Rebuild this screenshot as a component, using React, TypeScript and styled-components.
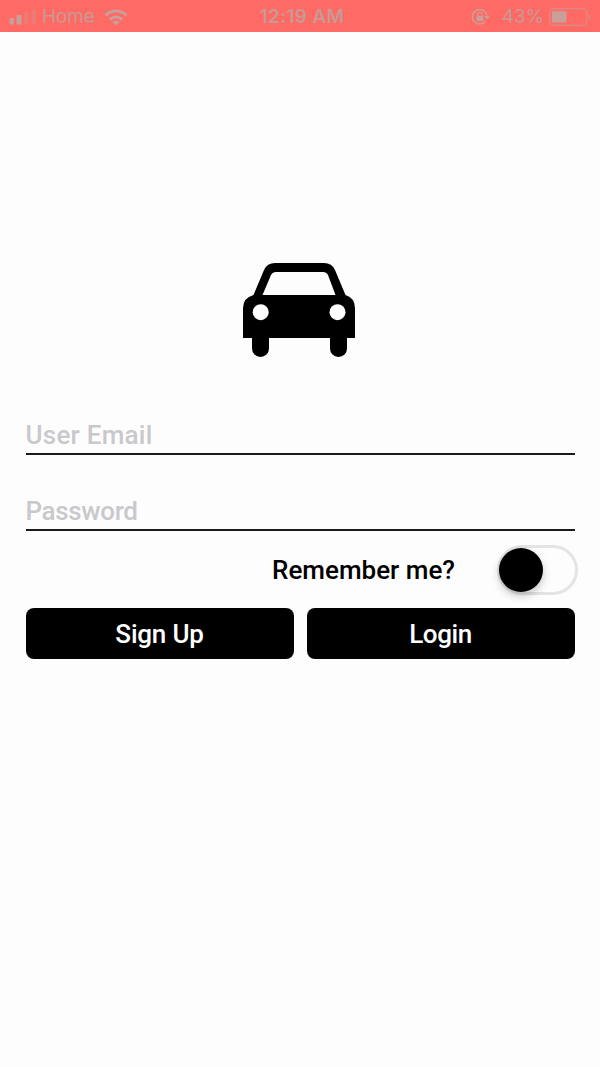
import React from "react";
import styled, { createGlobalStyle } from "styled-components";

const GlobalStyle = createGlobalStyle`
  * { box-sizing: border-box; }
  body { margin: 0; background: #fefdfe; }
`;

const Screen = styled.div`
  display: flex;
  flex-direction: column;
  height: 1067px;
  background: #fefdfe;
  font-family: Roboto, sans-serif;
  overflow: hidden;
`;

const StatusBar = styled.header`
  display: grid;
  grid-template-columns: 1fr auto 1fr;
  align-items: center;
  height: 32px;
  padding: 2px 8px 0 9px;
  background: #ff6a64;
  color: #c99994;
  font-family: Inter, sans-serif;
  font-size: 19px;
  line-height: 30px;
`;

const StatusGroup = styled.div<{ $end?: boolean }>`
  display: flex;
  align-items: center;
  justify-content: ${(p) => (p.$end ? "flex-end" : "flex-start")};
  svg { display: block; flex: none; }
`;

const StatusText = styled.span<{ $spacing?: number; $bold?: boolean; $margin?: string }>`
  margin: ${(p) => p.$margin ?? "0 0 0 3px"};
  letter-spacing: ${(p) => p.$spacing ?? 0}px;
  font-weight: ${(p) => (p.$bold ? 600 : 400)};
`;

const Content = styled.main`
  display: flex;
  flex-direction: column;
  padding: 231px 25px 0 25.5px;
`;

const Logo = styled.svg`
  display: block;
  align-self: center;
  width: 112px;
  height: 94px;
  margin-right: 2.5px;
`;

const Field = styled.input<{ $top: number; $height: number; $spacing: number }>`
  display: block;
  width: 549px;
  height: ${(p) => p.$height}px;
  margin: ${(p) => p.$top}px 0 0;
  padding: 0;
  border: 0;
  border-bottom: 2px solid #1a1a1a;
  border-radius: 0;
  outline: 0;
  background: transparent;
  color: #000;
  font: 500 26px/36px Roboto, sans-serif;
  letter-spacing: ${(p) => p.$spacing}px;
  &::placeholder { color: #c9c8cb; opacity: 1; }
`;

const RememberRow = styled.label`
  display: flex;
  align-items: center;
  justify-content: flex-end;
  height: 50px;
  margin: 14px -3px 0 0;
`;

const RememberText = styled.span`
  margin: 0 42px 1px 0;
  font-size: 26px;
  font-weight: 500;
  line-height: 36px;
  color: #000;
`;

const Track = styled.span`
  display: flex;
  align-items: center;
  width: 81px;
  height: 50px;
  border: 3px solid #e4e3e5;
  border-radius: 25px;
`;

const Thumb = styled.span`
  width: 44px;
  height: 44px;
  margin-left: -1px;
  border-radius: 50%;
  background: #000;
  box-shadow: 0 4px 8px rgba(0, 0, 0, 0.22);
`;

const Actions = styled.div`
  display: grid;
  grid-template-columns: 268px 268px;
  column-gap: 13px;
  margin-top: 13px;
`;

const Button = styled.button<{ $spacing: number }>`
  height: 51px;
  padding: 1px 0 0;
  border: 0;
  border-radius: 8px;
  background: #000;
  color: #fff;
  font: 500 26px/50px Roboto, sans-serif;
  letter-spacing: ${(p) => p.$spacing}px;
`;

const SignalIcon = () => (
  <svg width="28" height="16" viewBox="0 0 28 16">
    <rect x="0.5" y="9" width="4.5" height="6.5" rx="1" fill="#c99f9a" />
    <rect x="7.5" y="6" width="5" height="9.5" rx="1" fill="#c99f9a" />
    <rect x="15" y="3" width="4.5" height="12.5" rx="1" fill="#ed7b75" />
    <rect x="22.5" y="0" width="4.5" height="15.5" rx="1" fill="#ed7b75" />
  </svg>
);

const WifiIcon = () => (
  <svg width="24" height="17" viewBox="0 0 24 17" fill="none" stroke="#c99f9a" strokeWidth="3">
    <path d="M1.5 6.5C7.2.6 16.8.6 22.5 6.5" />
    <path d="M5.8 10.5c3.5-3.3 8.9-3.3 12.4 0" />
    <path d="M12 16.5 8.4 13c2-1.8 5.2-1.8 7.2 0Z" fill="#c99f9a" stroke="none" />
  </svg>
);

const RotationLockIcon = () => (
  <svg width="20" height="18" viewBox="0 0 20 18" fill="none" stroke="#c99f9a" strokeWidth="1.5">
    <path d="M14.4 13.4A7.3 7.3 0 1 1 15.8 7" />
    <path d="M13 7.8h6l-3 4Z" fill="#c99f9a" stroke="none" />
    <rect x="5.7" y="7.9" width="6.6" height="5" rx=".6" fill="#c99f9a" stroke="none" />
    <path d="M7 8V6a2 2 0 0 1 4 0V8" strokeWidth="1.2" />
  </svg>
);

const BatteryIcon = () => (
  <svg width="43" height="18" viewBox="0 0 43 18">
    <rect x=".8" y=".8" width="37" height="16.4" rx="4" fill="none" stroke="#dd8883" strokeWidth="1.5" />
    <rect x="3" y="3.3" width="14.5" height="11.2" rx="1" fill="#c99f9a" />
    <path d="M39.7 6.2c2.6.8 2.6 4.8 0 5.6Z" fill="#dd8883" />
  </svg>
);

const CarLogo = () => (
  <Logo viewBox="0 0 112 94" aria-label="Car">
    <path
      fillRule="evenodd"
      d="M32 0H81Q89 0 92 7L102.5 32Q112 35 112 45V75H104V85.5a8.5 8.5 0 0 1-17 0V75H26V85.5a8.5 8.5 0 0 1-17 0V75H0V45Q0 35 10.500 32L21 7Q24 0 32 0ZM33 9Q29.500 9 28 12L19.500 32H92.500L85 12Q83.500 9 80 9Z"
    />
    <circle cx="17.700" cy="49.200" r="8" fill="#fff" />
    <circle cx="94.500" cy="49.200" r="8" fill="#fff" />
  </Logo>
);

export default function App() {
  return (
    <>
      <GlobalStyle />
      <Screen>
        <StatusBar>
          <StatusGroup>
            <SignalIcon />
            <StatusText $spacing={-0.1} $margin="0 9px 0 5px">Home</StatusText>
            <WifiIcon />
          </StatusGroup>
          <StatusText $bold $spacing={0.3}>12:19 AM</StatusText>
          <StatusGroup $end>
            <RotationLockIcon />
            <StatusText $spacing={-0.2} $margin="0 5px 0 11px">43%</StatusText>
            <BatteryIcon />
          </StatusGroup>
        </StatusBar>
        <Content>
          <CarLogo />
          <Field $top={59} $height={39} $spacing={0.25} type="text" placeholder="User Email" />
          <Field $top={38} $height={38} $spacing={-0.35} type="password" placeholder="Password" />
          <RememberRow>
            <RememberText>Remember me?</RememberText>
            <Track><Thumb /></Track>
          </RememberRow>
          <Actions>
            <Button $spacing={-0.2} type="button">Sign Up</Button>
            <Button $spacing={-0.4} type="button">Login</Button>
          </Actions>
        </Content>
      </Screen>
    </>
  );
}
